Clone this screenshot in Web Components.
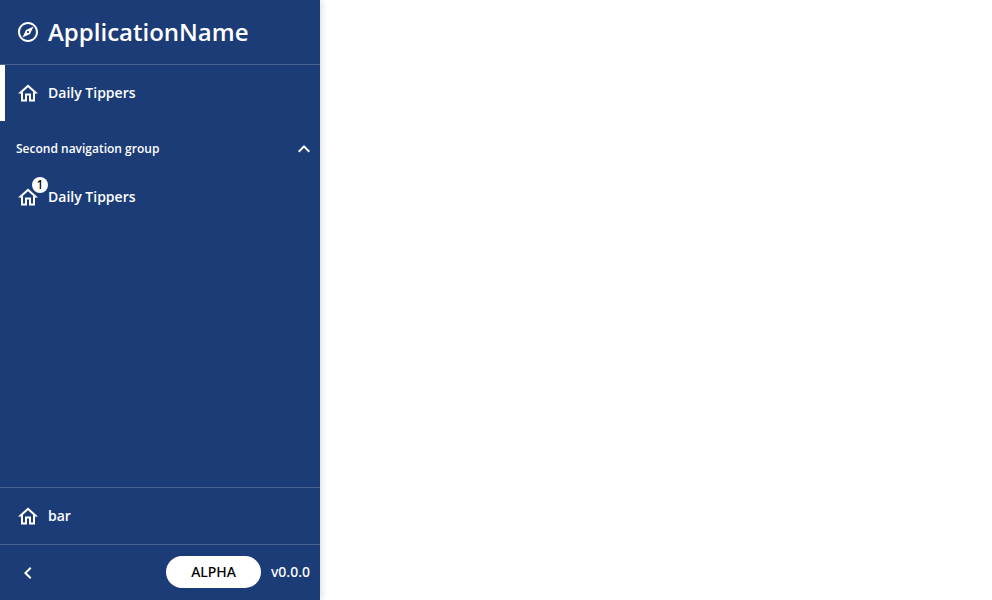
<!DOCTYPE html>
<html lang="en">
<head>
<meta charset="utf-8">
<title>ApplicationName</title>
<style>
  body {
    --label-font: "Noto Sans", "Open Sans", sans-serif;
    margin: 0; background: #fff; font-family: "Open Sans", "Noto Sans", sans-serif;
  }
</style>
</head>
<body>
<app-shell>
  <app-sidebar slot="nav">
    <app-title slot="header">ApplicationName</app-title>
    <nav-item href="#daily" active>Daily Tippers</nav-item>
    <nav-group label="Second navigation group">
      <nav-item href="#daily-2" badge="1">Daily Tippers</nav-item>
    </nav-group>
    <nav-item slot="bottom" href="#bar">bar</nav-item>
    <sidebar-footer slot="footer" stage="ALPHA" version="v0.0.0"></sidebar-footer>
  </app-sidebar>
</app-shell>
<script>
const PATHS = {
  compass: "M12 2C6.48 2 2 6.48 2 12s4.48 10 10 10 10-4.48 10-10S17.52 2 12 2zm0 18c-4.41 0-8-3.59-8-8s3.59-8 8-8 8 3.59 8 8-3.59 8-8 8zm-5.5-2.5l7.51-3.49L17.5 6.5 9.99 9.99 6.5 17.5zm5.5-6.6c.61 0 1.1.49 1.1 1.1s-.49 1.1-1.1 1.1-1.1-.49-1.1-1.1.49-1.1 1.1-1.1z",
  home: "M12 6.19l5 4.5v7.81h-2v-6H9v6H7v-7.81l5-4.5M12 3.5l-10 9h3v8h6v-6h2v6h6v-8h3l-10-9z",
  up: "M12 8l-6 6 1.41 1.41L12 10.83l4.59 4.58L18 14l-6-6z",
  down: "M16.59 8.59L12 13.17 7.41 8.59 6 10l6 6 6-6z",
  left: "M15.41 8.41L14 7l-6 6 6 6 1.41-1.41L10.83 13z"
};
function define(name, html, setup) {
  const template = document.createElement("template");
  template.innerHTML = html;
  customElements.define(name, class extends HTMLElement {
    connectedCallback() {
      if (this.shadowRoot) return;
      const root = this.attachShadow({ mode: "open" });
      root.append(template.content.cloneNode(true));
      if (setup) setup(this, root);
    }
  });
}

define("app-icon", `
<style>
  :host { display: block; flex: none; width: 24px; height: 24px; }
  svg { display: block; width: 100%; height: 100%; fill: currentColor; }
</style>
<svg viewBox="0 0 24 24" aria-hidden="true"><path/></svg>`,
(el, root) => root.querySelector("path").setAttribute("d", PATHS[el.getAttribute("name")]));

define("app-shell", `
<style>
  :host { display: flex; min-height: 100vh; }
  main { flex: 1; }
</style>
<slot name="nav"></slot><main><slot></slot></main>`);

define("app-sidebar", `
<style>
  :host {
    --line: #496393;
    display: flex; flex-direction: column; flex: none; width: 320px;
    background: #1c3c78; color: #fff;
    box-shadow: 0 0 8px rgba(0, 0, 0, .2);
  }
  header { border-bottom: 1px solid var(--line); }
  nav { flex: 1; }
  .bottom, footer { border-top: 1px solid var(--line); }
</style>
<header><slot name="header"></slot></header>
<nav aria-label="Main"><slot></slot></nav>
<div class="bottom"><slot name="bottom"></slot></div>
<footer><slot name="footer"></slot></footer>`);

define("app-title", `
<style>
  :host { display: flex; align-items: center; gap: 8px; height: 64px; padding: 0 16px; }
  h1 { margin: 0; font-size: 24px; line-height: 32px; font-weight: 600; }
</style>
<app-icon name="compass"></app-icon><h1><slot></slot></h1>`);

define("nav-item", `
<style>
  :host { display: block; }
  a {
    display: flex; align-items: center; gap: 8px; height: 56px; padding: 0 16px;
    color: inherit; text-decoration: none; font-size: 14px; line-height: 20px; font-weight: 600;
  }
  :host([active]) a { box-shadow: inset 5px 0 #fff; }
  .icon { position: relative; }
  .badge {
    position: absolute; top: -8px; right: -8px; width: 16px; height: 16px; border-radius: 50%;
    background: #fff; color: #000; font-family: var(--label-font);
    font-size: 12px; line-height: 16px; text-align: center; font-weight: 500;
  }
  .badge[hidden] { display: none; }
</style>
<a><span class="icon"><app-icon name="home"></app-icon><span class="badge" hidden></span></span><span><slot></slot></span></a>`,
(el, root) => {
  const a = root.querySelector("a");
  a.href = el.getAttribute("href");
  if (el.hasAttribute("active")) a.setAttribute("aria-current", "page");
  if (el.hasAttribute("badge")) {
    const badge = root.querySelector(".badge");
    badge.hidden = false;
    badge.textContent = el.getAttribute("badge");
  }
});

define("nav-group", `
<style>
  :host { display: block; }
  button {
    display: flex; align-items: center; justify-content: space-between;
    width: 100%; height: 48px; padding: 8px 4px 0 16px; border: 0; background: none; cursor: pointer;
    color: inherit; font-family: inherit; font-size: 12px; line-height: 16px; font-weight: 600;
  }
  [hidden] { display: none; }
</style>
<button type="button" aria-expanded="true"><span class="label"></span><app-icon name="up"></app-icon></button>
<div class="items"><slot></slot></div>`,
(el, root) => {
  const button = root.querySelector("button");
  root.querySelector(".label").textContent = el.getAttribute("label");
  button.addEventListener("click", () => {
    const items = root.querySelector(".items");
    items.hidden = !items.hidden;
    button.setAttribute("aria-expanded", String(!items.hidden));
    root.querySelector("app-icon").shadowRoot.querySelector("path")
      .setAttribute("d", items.hidden ? PATHS.down : PATHS.up);
  });
});

define("sidebar-footer", `
<style>
  :host {
    display: flex; align-items: center; gap: 10px; padding: 11px 10px 12px 16px;
    font-family: var(--label-font); font-size: 14px; line-height: 20px; font-weight: 500;
  }
  button { margin: 0 auto 0 0; padding: 0; border: 0; background: none; color: inherit; cursor: pointer; }
  .stage { padding: 6px 25px; border-radius: 16px; background: #fff; color: #000; }
</style>
<button type="button" aria-label="Collapse navigation"><app-icon name="left"></app-icon></button>
<span class="stage"></span><span class="version"></span>`,
(el, root) => {
  root.querySelector(".stage").textContent = el.getAttribute("stage");
  root.querySelector(".version").textContent = el.getAttribute("version");
});
</script>
</body>
</html>
